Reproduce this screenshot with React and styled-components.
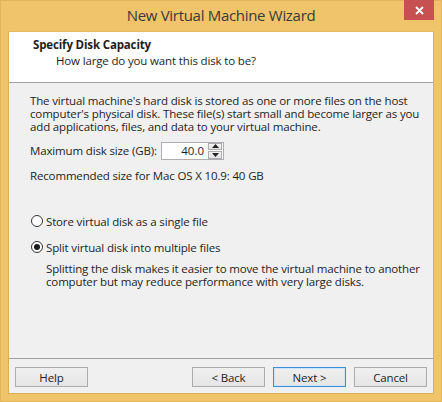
import React from "react";
import styled, { createGlobalStyle } from "styled-components";

const Global = createGlobalStyle`
  html, body { margin: 0; padding: 0; }
  body {
    width: 442px; height: 402px; overflow: hidden;
    background: #efc46b;
    font-family: "Open Sans", "Noto Sans", sans-serif;
    color: #1e1e1e;
  }
`;

const Window = styled.div`
  width: 442px; height: 402px; box-sizing: border-box;
  display: flex; flex-direction: column;
  background: #efc46b;
  border: 1px solid #e2b559;
`;

const TitleBar = styled.div`
  height: 30px;
  display: grid;
  grid-template-columns: 1fr auto 1fr;
  align-items: start;
`;

const Title = styled.div`
  grid-column: 2;
  padding-top: 3px;
  font-size: 15px;
  letter-spacing: -0.3px;
  color: #3a3a3a;
  line-height: 22px;
  white-space: nowrap;
`;

const Close = styled.div`
  grid-column: 3; justify-self: end;
  width: 30px; height: 20px; margin-top: -1px; margin-right: 7px;
  background: #c75050;
  display: flex; align-items: center; justify-content: center;
`;

const Client = styled.div`
  flex: 1;
  margin: 0 7px 7px 7px;
  display: flex; flex-direction: column;
  background: #f0f0f0;
  border: 1px solid #d9b056;
  border-top-color: #e4bb60;
`;

const Header = styled.div`
  height: 51px;
  background: #ffffff;
  border-bottom: 1px solid #a0a0a0;
  padding: 5px 0 0 24px;
  box-sizing: border-box;
`;

const HeaderTitle = styled.div`
  font-weight: 700; font-size: 11.5px; line-height: 16px; letter-spacing: -0.15px;
`;

const HeaderSub = styled.div`
  padding-left: 23px;
  font-size: 11.5px; line-height: 16px; letter-spacing: -0.15px;
`;

const Body = styled.div`
  flex: 1;
  padding: 11px 0 0 21px;
  display: flex; flex-direction: column;
`;

const Text = styled.p`
  margin: 0;
  padding-left: ${p => p.$indent || 0}px;
  font-size: 11.5px; line-height: 13px; letter-spacing: -0.15px;
  margin-top: ${p => p.$mt || 0}px;
  white-space: nowrap;
`;

const SizeRow = styled.div`
  display: flex; align-items: center;
  margin-top: 7px;
  height: 21px;
`;

const Label = styled.span`
  width: 131px;
  font-size: 11.5px; letter-spacing: -0.15px;
  white-space: nowrap;
`;

const Spin = styled.div`
  display: flex;
  width: 63px; height: 18px; box-sizing: border-box;
  border: 1px solid #abadb3;
  background: #fff;
`;

const SpinValue = styled.div`
  flex: 1;
  text-align: right; padding-right: 4px;
  font-size: 11.5px; line-height: 16px;
`;

const SpinButtons = styled.div`
  width: 14px; display: flex; flex-direction: column; gap: 1px;
  padding: 0 1px 0 0;
`;

const SpinBtn = styled.div`
  flex: 1;
  display: flex; align-items: center; justify-content: center;
  background: linear-gradient(#f4f4f4, #e3e3e3);
  border: 1px solid #acacac;
`;

const RadioRow = styled.label`
  display: flex; align-items: center;
  margin-top: ${p => p.$mt}px;
  font-size: 11.5px; letter-spacing: -0.15px;
  height: 16px;
  white-space: nowrap;
`;

const RadioCircle = styled.span`
  width: 12px; height: 12px; box-sizing: border-box;
  border-radius: 50%;
  border: 1px solid #333;
  background: #fff;
  margin: 0 3px 0 1px;
  display: flex; align-items: center; justify-content: center;
  &::after {
    content: "";
    width: 6px; height: 6px; border-radius: 50%;
    background: ${p => (p.$checked ? "#1a1a1a" : "transparent")};
  }
`;

const Footer = styled.div`
  height: 35px;
  border-top: 1px solid #a0a0a0;
  display: flex; align-items: flex-start;
  padding: 8px 6px 0 6px;
  box-sizing: border-box;
  gap: 8px;
`;

const Button = styled.div`
  width: 73px; height: 20px; box-sizing: border-box;
  border: 1px solid ${p => (p.$default ? "#3c8ed8" : "#acacac")};
  background: linear-gradient(#f0f0f0, #e5e5e5);
  display: flex; align-items: center; justify-content: center;
  font-size: 11.5px; letter-spacing: -0.15px;
  margin-left: ${p => (p.$push ? "auto" : "0")};
  ${p => p.$default && "box-shadow: inset 0 0 0 1px #cfe3f7;"}
`;

const Arrow = ({ up }) => (
  <svg width="7" height="4" viewBox="0 0 7 4">
    <path d={up ? "M3.5 0 L7 4 L0 4 Z" : "M0 0 L7 0 L3.5 4 Z"} fill="#222" />
  </svg>
);

export default function App() {
  return (
    <>
      <Global />
      <Window>
        <TitleBar>
          <Title>New Virtual Machine Wizard</Title>
          <Close>
            <svg width="9" height="9" viewBox="0 0 9 9">
              <path d="M1 1 L8 8 M8 1 L1 8" stroke="#fff" strokeWidth="1.8" />
            </svg>
          </Close>
        </TitleBar>
        <Client>
          <Header>
            <HeaderTitle>Specify Disk Capacity</HeaderTitle>
            <HeaderSub>How large do you want this disk to be?</HeaderSub>
          </Header>
          <Body>
            <Text>
              The virtual machine's hard disk is stored as one or more files on the host
              <br />
              computer's physical disk. These file(s) start small and become larger as you
              <br />
              add applications, files, and data to your virtual machine.
            </Text>
            <SizeRow>
              <Label>Maximum disk size (GB):</Label>
              <Spin>
                <SpinValue>40.0</SpinValue>
                <SpinButtons>
                  <SpinBtn><Arrow up /></SpinBtn>
                  <SpinBtn><Arrow /></SpinBtn>
                </SpinButtons>
              </Spin>
            </SizeRow>
            <Text $mt={8}>Recommended size for Mac OS X 10.9: 40 GB</Text>
            <RadioRow $mt={31}>
              <RadioCircle />
              Store virtual disk as a single file
            </RadioRow>
            <RadioRow $mt={10}>
              <RadioCircle $checked />
              Split virtual disk into multiple files
            </RadioRow>
            <Text $indent={16} $mt={7}>
              Splitting the disk makes it easier to move the virtual machine to another
              <br />
              computer but may reduce performance with very large disks.
            </Text>
          </Body>
          <Footer>
            <Button>Help</Button>
            <Button $push>&lt; Back</Button>
            <Button $default>Next &gt;</Button>
            <Button>Cancel</Button>
          </Footer>
        </Client>
      </Window>
    </>
  );
}
